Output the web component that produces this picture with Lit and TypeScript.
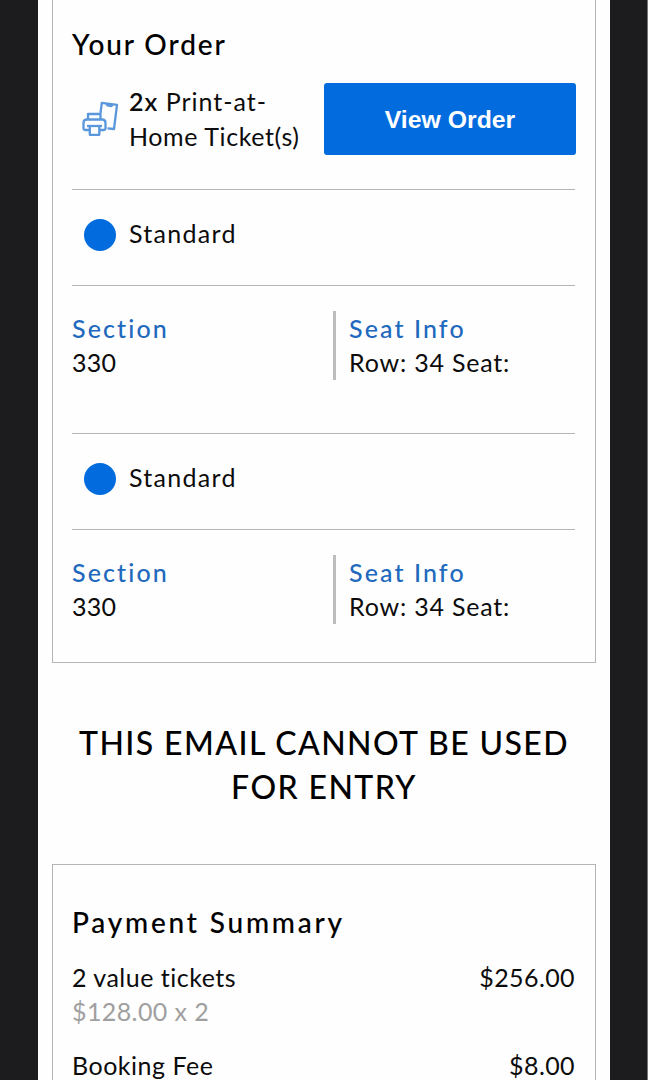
import { LitElement, html, css, svg } from "lit";
import { customElement } from "lit/decorators.js";

const tickets = [
  { type: "Standard", section: "330", seat: "Row: 34 Seat:" },
  { type: "Standard", section: "330", seat: "Row: 34 Seat:" },
];

const printerIcon = svg`
  <path d="M21.500 15 22.800 4.800 38 6.800 35 31 28.500 30.300" />
  <path d="M27.500 5.600 28.500 7.400 32.500 8 33.500 6.400" />
  <path d="M9 21V16H21.500V21" />
  <path d="M10.500 32H6.500Q4.500 32 4.500 30V25Q4.500 21.500 8 21.500H23Q26.500 21.500 26.500 25V30Q26.500 32 24.500 32H20.500" />
  <path d="M8 28H23" />
  <path d="M10.800 28V36.800H20.300V28" />`;

@customElement("app-root")
export class AppRoot extends LitElement {
  static styles = css`
    :host {
      display: block;
      width: 648px;
      height: 1080px;
      overflow: hidden;
      box-sizing: border-box;
      background: #1c1c1e;
      border-right: 1px solid #77777a;
      font-family: Lato, "Open Sans", sans-serif;
      font-size: 25px;
      line-height: 34.4px;
      color: #0c0c0c;
      white-space: nowrap;
    }
    .page {
      box-sizing: border-box;
      width: 572px;
      height: 1080px;
      margin-left: 38px;
      padding: 0 14px;
      background: #fefefe;
    }
    .card {
      box-sizing: border-box;
      width: 544px;
      border: 1.5px solid #b5b5b5;
      padding: 0 20px 0 19px;
    }
    .order {
      height: 663px;
      border-top: 0;
      padding-top: 27px;
    }
    .payment {
      height: 217px;
      padding-top: 40px;
      border-bottom: 0;
    }
    h2 {
      margin: 0;
      font-size: 28px;
      font-weight: 500;
      line-height: 34px;
      color: #000;
      -webkit-text-stroke: 0.1px #000;
    }
    .t-order { letter-spacing: 1.9px; }
    .t-pay { letter-spacing: 2.8px; }
    .delivery {
      display: flex;
      align-items: center;
      height: 72px;
      margin: 22px 0 34px;
    }
    .icon {
      flex: none;
      width: 56px;
      display: flex;
      justify-content: center;
    }
    .icon svg {
      width: 42px;
      height: 42px;
      fill: none;
      stroke: #5a97dc;
      stroke-width: 2.300;
      stroke-linejoin: round;
    }
    .what {
      flex: 1;
      padding: 0 0 1px 1px;
    }
    .what b { font-weight: 600; }
    .btn {
      width: 252px;
      height: 72px;
      margin-right: -1px;
      border: 0;
      border-radius: 3px;
      background: #026cdf;
      color: #fff;
      font: 700 24.8px/72px "Liberation Sans", sans-serif;
      padding: 1px 0 0;
    }
    .type {
      display: flex;
      align-items: center;
      box-sizing: border-box;
      height: 96px;
      padding-bottom: 5px;
      border-top: 1.5px solid #b5b5b5;
    }
    .dot {
      width: 32px;
      height: 32px;
      border-radius: 50%;
      background: #026cdf;
    }
    .place {
      display: flex;
      box-sizing: border-box;
      height: 148px;
      padding-top: 25px;
      border-top: 1.5px solid #b5b5b5;
    }
    .section { width: 261px; letter-spacing: 0.3px; }
    .seat {
      height: 69px;
      border-left: 3px solid #bdbdbd;
      padding-left: 13px;
    }
    .label {
      font-weight: 500;
      color: #2169bd;
      letter-spacing: 2.1px;
    }
    .notice {
      margin: 58px 0 55px;
      text-align: center;
      font-size: 32px;
      font-weight: 500;
      line-height: 44px;
      letter-spacing: 1.4px;
      color: #000;
    }
    .line {
      display: flex;
      justify-content: space-between;
    }
    .tickets { margin-top: 21px; }
    .unit { color: #a0a0a0; letter-spacing: 0.4px; }
    .fee { margin-top: 22px; line-height: 28px; }
    .amount { letter-spacing: 0.4px; }
    .s-print { letter-spacing: 1px; }
    .s-home { letter-spacing: 0.6px; }
    .s-std { letter-spacing: 1.3px; padding: 0 0 4px 1px; }
    .s-row { letter-spacing: 0.8px; }
    .s-val { letter-spacing: 0.5px; }
    .s-fee { letter-spacing: 0.5px; }
  `;

  render() {
    return html`
      <main class="page">
        <section class="card order">
          <h2 class="t-order">Your Order</h2>
          <div class="delivery">
            <div class="icon"><svg viewBox="0 0 42 42">${printerIcon}</svg></div>
            <div class="what">
              <div class="s-print"><b>2x</b> Print-at-</div>
              <div class="s-home">Home Ticket(s)</div>
            </div>
            <button class="btn">View Order</button>
          </div>
          ${tickets.map(
            (t) => html`
              <div class="type">
                <div class="icon"><div class="dot"></div></div>
                <div class="s-std">${t.type}</div>
              </div>
              <div class="place">
                <div class="section">
                  <div class="label">Section</div>
                  <div>${t.section}</div>
                </div>
                <div class="seat">
                  <div class="label">Seat Info</div>
                  <div class="s-row">${t.seat}</div>
                </div>
              </div>
            `
          )}
        </section>
        <div class="notice">THIS EMAIL CANNOT BE USED<br />FOR ENTRY</div>
        <section class="card payment">
          <h2 class="t-pay">Payment Summary</h2>
          <div class="line tickets"><span class="s-val">2 value tickets</span><span class="amount">$256.00</span></div>
          <div class="unit">$128.00 x 2</div>
          <div class="line fee"><span class="s-fee">Booking Fee</span><span class="amount">$8.00</span></div>
        </section>
      </main>
    `;
  }
}
